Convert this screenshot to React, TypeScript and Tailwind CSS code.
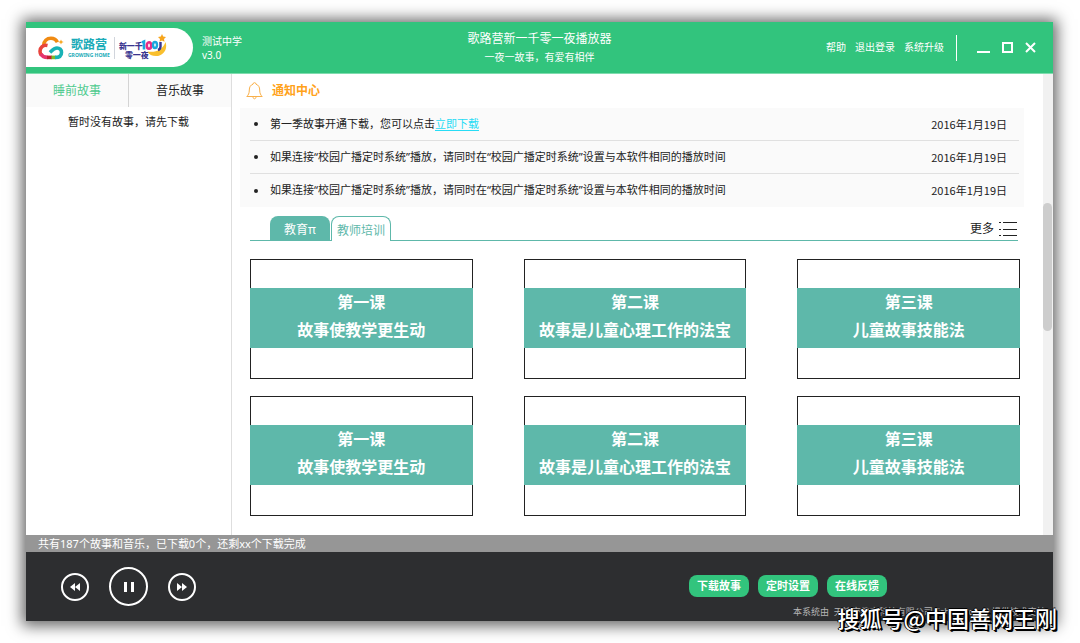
import React, { useState } from 'react';

const notices = [
  { id: 1, text: '第一季故事开通下载，您可以点击', link: '立即下载', date: '2016年1月19日' },
  { id: 2, text: '如果连接“校园广播定时系统”播放，请同时在“校园广播定时系统”设置与本软件相同的播放时间', date: '2016年1月19日' },
  { id: 3, text: '如果连接“校园广播定时系统”播放，请同时在“校园广播定时系统”设置与本软件相同的播放时间', date: '2016年1月19日' }
];

const lessons = [
  { title: '第一课', name: '故事使教学更生动' },
  { title: '第二课', name: '故事是儿童心理工作的法宝' },
  { title: '第三课', name: '儿童故事技能法' },
  { title: '第一课', name: '故事使教学更生动' },
  { title: '第二课', name: '故事是儿童心理工作的法宝' },
  { title: '第三课', name: '儿童故事技能法' }
];

const CloudLogo: React.FC = () => (
  <svg width="26" height="24" viewBox="0 0 26 24" fill="none" strokeWidth="3.6" aria-hidden="true">
    <path d="M5.500 10C5.500 5 9 2.300 13 2.300c3 0 5.200 1.500 6.400 4" stroke="#f08a12" />
    <path d="M9.500 9.500C5 8.500 2 11.500 2 15.200c0 1.500.5 2.800 1.300 3.800" stroke="#e8443c" />
    <path d="M2.800 18c1.500 2.500 3.800 3.400 6.700 3.400" stroke="#e5356e" />
    <path d="M9 21.400h5" stroke="#c3202f" />
    <path d="M13.500 21.400h4" stroke="#7cba2c" />
    <path d="M17 21.400c4.500 0 6.500-1.900 6.500-5 0-2.700-2-4.400-4.500-4.400-3 0-4.500 2-7 4.500" stroke="#18b2b6" />
    <path d="m23 3.500.8 1.800 1.900.7-1.900.8-.8 1.800-.8-1.800-1.900-.8 1.900-.7z" fill="#f7a51c" />
  </svg>
);

const MoonLogo: React.FC = () => (
  <svg width="26" height="24" viewBox="0 0 26 24" fill="none" aria-hidden="true">
    <path d="M24.500 8c2.500 7-2 14-9.500 14-4 0-7-1.500-8.500-4.500C14 19 22 16 24.500 8z" fill="#f9bf2d" />
    <path d="m21 0 1.200 2.600 2.800.4-2 2 .5 2.800L21 6.500l-2.500 1.300.5-2.800-2-2 2.800-.4z" fill="#f7a51c" />
    <path d="M1 8.500l2-1v8" stroke="#1ba7de" strokeWidth="2.600" />
    <ellipse cx="8" cy="11.500" rx="2.200" ry="3.200" stroke="#e72d85" strokeWidth="2.600" />
    <ellipse cx="14" cy="11" rx="2" ry="3" stroke="#1ba7de" strokeWidth="2.400" />
    <path d="M19.500 8v4.500c0 2-1 3-2.500 3.500" stroke="#39358f" strokeWidth="2.400" />
  </svg>
);

const BellIcon: React.FC = () => (
  <svg width="17" height="18" viewBox="0 0 17 18" fill="none" stroke="#f9b04a" aria-hidden="true">
    <path d="M7 2.200a1.500 1.500 0 0 1 3 0c2.500.8 3.700 3 3.700 5.800 0 3.500 1 5 2.500 6.500H.8C2.300 13 3.300 11.500 3.300 8c0-2.800 1.200-5 3.700-5.800z" />
    <path d="M7 14.800c0 2.700 3 2.700 3 0" />
  </svg>
);

const ListIcon: React.FC = () => (
  <svg width="18" height="14" viewBox="0 0 18 14" stroke="#222" aria-hidden="true">
    <path d="M0 .5h2M4 .5h14M0 7.500h2M4 7.500h14M0 13.500h2M4 13.500h14" />
  </svg>
);

const App: React.FC = () => {
  const [storyTab, setStoryTab] = useState('sleep');
  const [courseTab, setCourseTab] = useState('edu');

  return (
    <div className="flex min-h-screen flex-col bg-white pt-[22px] pr-[27px] pb-[22px] pl-[26px] font-['Noto_Sans','Noto_Sans_CJK_SC',sans-serif] text-[#222]">
      <div className="relative flex flex-1 flex-col bg-white shadow-[0_1px_14px_4px_rgba(0,0,0,0.6)]">
        {/* Header */}
        <header className="grid grid-cols-[1fr_auto_1fr] items-center border-b border-[#7fdcae] bg-[#32c47d] py-[6px] text-white">
          <div className="flex items-center gap-[9px]">
            <div className="flex h-[39px] w-[167px] items-center rounded-r-full bg-white pl-3">
              <CloudLogo />
              <div className="ml-1 flex flex-col items-center font-bold text-[#1aabb8]">
                <span className="text-xs leading-[15px]">歌路营</span>
                <span className="text-[5px] leading-[6px]">GROWING HOME</span>
              </div>
              <div className="mx-1 h-[22px] w-px bg-gray-300"></div>
              <div className="flex items-center">
                <div className="pt-1 text-[8px] leading-[9px] font-black text-[#39358f]">
                  <div>新一千</div>
                  <div className="pl-[6px]">零一夜</div>
                </div>
                <div className="-ml-2 pb-1">
                  <MoonLogo />
                </div>
              </div>
            </div>
            <div className="text-[10px] leading-[14px]">
              <div>测试中学</div>
              <div>v3.0</div>
            </div>
          </div>
          <div className="text-center">
            <h1 className="text-xs leading-[18px]">歌路营新一千零一夜播放器</h1>
            <p className="text-[10px] leading-[18px]">一夜一故事，有爱有相伴</p>
          </div>
          <div className="flex items-center justify-end pr-[17px]">
            <nav className="flex gap-[9px] text-[10px]">
              <a href="#help">帮助</a>
              <a href="#logout">退出登录</a>
              <a href="#upgrade">系统升级</a>
            </nav>
            <div className="ml-3 h-[26px] w-px bg-white"></div>
            <div className="ml-5 flex items-center gap-3">
              <button aria-label="最小化">
                <svg width="13" height="12" stroke="#fff" strokeWidth="2"><path d="M0 10h13" /></svg>
              </button>
              <button aria-label="最大化">
                <svg width="11" height="11" fill="none" stroke="#fff" strokeWidth="2"><path d="M1 1h9v9H1z" /></svg>
              </button>
              <button aria-label="关闭">
                <svg width="11" height="11" stroke="#fff" strokeWidth="2"><path d="M1 1l9 9M10 1l-9 9" /></svg>
              </button>
            </div>
          </div>
        </header>

        <div className="flex flex-1">
          {/* Sidebar */}
          <aside className="w-[206px] shrink-0 border-r border-[#dedede]">
            <div className="flex bg-[#fafafa] text-xs">
              <button
                onClick={() => setStoryTab('sleep')}
                className={`h-[33px] flex-1 border-r border-[#d4d4d4] ${storyTab === 'sleep' ? 'text-[#4fcb8f]' : ''}`}
              >
                睡前故事
              </button>
              <button
                onClick={() => setStoryTab('music')}
                className={`h-[33px] flex-1 ${storyTab === 'music' ? 'text-[#4fcb8f]' : ''}`}
              >
                音乐故事
              </button>
            </div>
            <p className="pt-[7px] text-center text-[11px] leading-4">暂时没有故事，请先下载</p>
          </aside>

          {/* Content */}
          <main className="min-w-0 flex-1 pr-[19px] pb-[19px] pl-2">
            <h2 className="flex h-[34px] items-center gap-[9px] pl-[6px] text-xs font-bold text-[#ffa21a]">
              <BellIcon />
              通知中心
            </h2>

            <ul className="bg-[#fafafa] pr-[5px] pl-[10px] text-[11px]">
              {notices.map((notice) => (
                <li key={notice.id} className="flex h-[33px] items-center border-b border-[#e0e0e0] pr-3 pl-1 last:border-b-0">
                  <span className="mr-3 size-1 rounded-full bg-[#222]"></span>
                  <span className="flex-1">
                    {notice.text}
                    {notice.link && (
                      <a href="#download" className="text-[#27dcf5] underline underline-offset-2">{notice.link}</a>
                    )}
                  </span>
                  <span className="font-['Noto_Sans_CJK_SC',sans-serif]">{notice.date}</span>
                </li>
              ))}
            </ul>

            <div className="mt-[9px] mr-[6px] ml-[10px] flex items-end border-b border-[#5eb8aa] pl-5 text-xs">
              <button
                onClick={() => setCourseTab('edu')}
                className={`h-6 w-[60px] rounded-t-lg pt-1 ${courseTab === 'edu' ? 'bg-[#5eb8aa] text-white' : 'border border-b-0 border-[#5eb8aa] text-[#5eb8aa]'}`}
              >
                教育π
              </button>
              <button
                onClick={() => setCourseTab('train')}
                className={`-mb-px ml-px h-[25px] w-[60px] rounded-t-lg pt-1 ${courseTab === 'train' ? 'bg-[#5eb8aa] text-white' : 'border border-b-0 border-[#5eb8aa] bg-white text-[#5eb8aa]'}`}
              >
                教师培训
              </button>
              <a href="#more" className="ml-auto flex h-[22px] items-center gap-[5px] pr-px">
                更多
                <ListIcon />
              </a>
            </div>

            <div className="mt-[18px] mr-1 ml-[10px] grid grid-cols-3 gap-x-[51px] gap-y-[17px]">
              {lessons.map((lesson, index) => (
                <a key={index} href="#lesson" className="block bg-[#222] p-px text-center text-base leading-7 font-bold text-white">
                  <div className="h-7 bg-white"></div>
                  <div className="-mx-px bg-[#5eb8aa] pb-1">
                    <div>{lesson.title}</div>
                    <div>{lesson.name}</div>
                  </div>
                  <div className="h-[30px] bg-white"></div>
                </a>
              ))}
            </div>
          </main>

          {/* Scrollbar */}
          <div className="w-[10px] shrink-0 bg-[#f1f1f1] pt-[129px]">
            <div className="h-32 w-[9px] rounded-full bg-[#cdcdcd]"></div>
          </div>
        </div>

        <div className="bg-[#969696] pl-3 text-[11px] leading-[17px] text-white">
          共有187个故事和音乐，已下载0个，还剩xx个下载完成
        </div>

        {/* Player */}
        <footer className="flex items-start justify-between bg-[#2d2e30] pl-[35px]">
          <div className="flex items-center gap-5 pt-[15px] text-white">
            <button aria-label="上一个" className="flex size-7 items-center justify-center rounded-full border-2 border-white">
              <svg width="10" height="8" fill="#fff"><path d="M5 0v8L0 4zM10 0v8L5 4z" /></svg>
            </button>
            <button aria-label="暂停" className="flex size-[39px] items-center justify-center rounded-full border-2 border-white">
              <svg width="10" height="10" fill="#fff"><path d="M0 0h3v10H0zM7 0h3v10H7z" /></svg>
            </button>
            <button aria-label="下一个" className="flex size-7 items-center justify-center rounded-full border-2 border-white">
              <svg width="10" height="8" fill="#fff"><path d="M0 0v8l5-4zM5 0v8l5-4z" /></svg>
            </button>
          </div>
          <div className="flex w-[364px] flex-col pt-[23px]">
            <div className="flex gap-[9px] text-[11px] font-bold text-white">
              <button className="h-[22px] w-[60px] rounded-lg bg-[#32c47d]">下载故事</button>
              <button className="h-[22px] w-[60px] rounded-lg bg-[#32c47d]">定时设置</button>
              <button className="h-[22px] w-[60px] rounded-lg bg-[#32c47d]">在线反馈</button>
            </div>
            <p className="pt-2 pb-[3px] pl-[104px] text-[9px] leading-[13px] whitespace-pre text-[#b5b5b5]">
              {'本系统由  天津市教育科技有限公司 (isheng.com) 提供技术支持'}
            </p>
          </div>
        </footer>

        {/* Watermark over the lower right corner */}
        <div className="absolute -right-1 -bottom-3 text-[22px] leading-8 font-medium whitespace-nowrap text-white font-['Noto_Sans_CJK_SC',sans-serif] [text-shadow:1px_1px_0_#000,2px_2px_0_#000,-1px_0_0_#000,0_-1px_0_#000]">
          搜狐号@中国善网王刚
        </div>
      </div>
    </div>
  );
};

export default App;
